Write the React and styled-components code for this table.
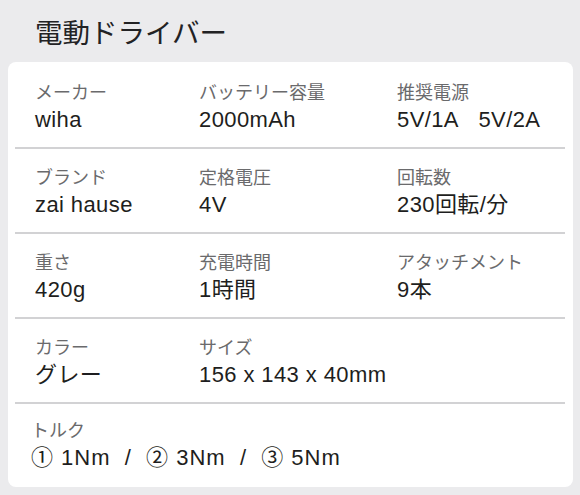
import React from "react"
import styled, { createGlobalStyle } from "styled-components"

const specs = [
  [
    { label: "メーカー", value: "wiha" },
    { label: "バッテリー容量", value: "2000mAh" },
    { label: "推奨電源", value: "5V/1A\u00a0\u00a0\u00a05V/2A" },
  ],
  [
    { label: "ブランド", value: "zai hause" },
    { label: "定格電圧", value: "4V" },
    { label: "回転数", value: "230回転/分" },
  ],
  [
    { label: "重さ", value: "420g" },
    { label: "充電時間", value: "1時間" },
    { label: "アタッチメント", value: "9本" },
  ],
  [
    { label: "カラー", value: "グレー" },
    { label: "サイズ", value: "156 x 143 x 40mm" },
  ],
]

export default function App() {
  return (
    <>
      <GlobalStyle />
      <Page>
        <Title>電動ドライバー</Title>
        <Card>
          {specs.map((row, i) => (
            <Row key={i}>
              {row.map((item) => (
                <Cell key={item.label}>
                  <Label>{item.label}</Label>
                  <Value>{item.value}</Value>
                </Cell>
              ))}
            </Row>
          ))}
          <Row $last>
            <Cell>
              <Label>トルク</Label>
              <Value $wide>
                ① 1Nm&nbsp;&nbsp;/&nbsp;&nbsp;② 3Nm&nbsp;&nbsp;/&nbsp;&nbsp;③ 5Nm
              </Value>
            </Cell>
          </Row>
        </Card>
      </Page>
    </>
  )
}

const GlobalStyle = createGlobalStyle`
  html, body {
    margin: 0;
    padding: 0;
    background: #ebebed;
  }
  body {
    font-family: "Liberation Sans", "Noto Sans CJK JP", sans-serif;
  }
`
const Page = styled.div`
  width: 580px;
  height: 495px;
  padding: 0 7px 0 8px;
  box-sizing: border-box;
  display: flex;
  flex-direction: column;
`
const Title = styled.h1`
  margin: 0;
  height: 62px;
  padding-left: 27px;
  display: flex;
  align-items: center;
  font-family: "Noto Sans CJK JP", sans-serif;
  font-size: 27.5px;
  font-weight: 400;
  color: #222224;
`
const Card = styled.section`
  background: #ffffff;
  border-radius: 8px;
  padding: 2px 8px 0 7px;
  height: 425px;
  box-sizing: border-box;
`
const Row = styled.div`
  display: grid;
  grid-template-columns: 164px 198px 1fr;
  padding: ${(p) => (p.$last ? "15px 0 0 16px" : "17px 0 13px 20px")};
  border-bottom: ${(p) => (p.$last ? "none" : "2px solid #d2d2d4")};
`
const Cell = styled.div`
  display: flex;
  flex-direction: column;
  gap: 1px;
  white-space: nowrap;
`
const Label = styled.span`
  font-size: 18px;
  line-height: 24px;
  color: #6a6a6c;
`
const Value = styled.span`
  font-size: 22px;
  line-height: 28px;
  letter-spacing: ${(p) => (p.$wide ? "1px" : "0.4px")};
  color: #1e1e20;
`
